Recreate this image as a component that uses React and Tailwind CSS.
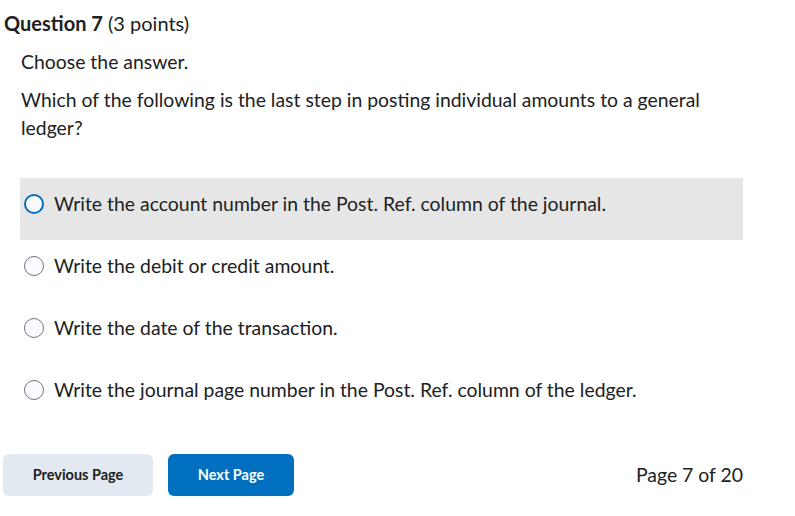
export default function App() {
  const options = [
    'Write the account number in the Post. Ref. column of the journal.',
    'Write the debit or credit amount.',
    'Write the date of the transaction.',
    'Write the journal page number in the Post. Ref. column of the ledger.',
  ]

  return (
    <div className="w-[795px] h-[516px] bg-white text-[#202122] font-['Lato',sans-serif] overflow-hidden">
      <div className="pt-[10px] pl-[4px]">
        <h2 className="text-[20px] leading-[26px]">
          <span className="font-bold">Question 7</span> (3 points)
        </h2>
      </div>
      <div className="pl-[21px] w-[745px]">
        <p className="mt-[12px] text-[19.4px] leading-[28px]">Choose the answer.</p>
        <p className="mt-[10px] text-[19.4px] leading-[28px]">
          Which of the following is the last step in posting individual amounts to a general ledger?
        </p>
      </div>
      <div className="mt-[36px] ml-[20px] w-[723px] flex flex-col">
        {options.map((opt, i) => (
          <label
            key={i}
            className={`flex items-center h-[62px] pb-[11px] pl-[4px] gap-[10px] text-[19.4px] ${i === 0 ? 'bg-[#e6e6e6]' : ''}`}
          >
            <span
              className={`w-[20px] h-[20px] rounded-full bg-[#f9fbff] shrink-0 ${
                i === 0 ? 'border-2 border-[#006fbf]' : 'border border-[#6e7477]'
              }`}
            />
            <span>{opt}</span>
          </label>
        ))}
      </div>
      <div className="mt-[28px] flex items-center pl-[3px] pr-[52px]">
        <button className="w-[150px] h-[42px] rounded-[6px] bg-[#e3e9f1] text-[14.5px] font-bold text-[#202122]">
          Previous Page
        </button>
        <button className="ml-[15px] w-[126px] h-[42px] rounded-[6px] bg-[#006fbf] text-[14.5px] font-bold text-white">
          Next Page
        </button>
        <span className="ml-auto text-[19.4px]">Page 7 of 20</span>
      </div>
    </div>
  )
}
